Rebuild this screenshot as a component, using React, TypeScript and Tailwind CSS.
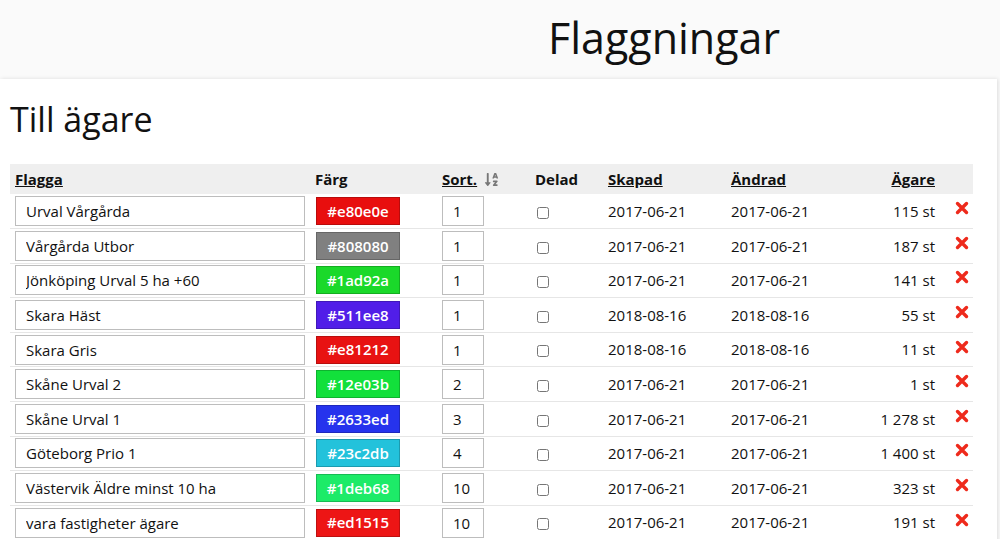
import { FaSortAlphaDown } from "react-icons/fa";

type Flagga = {
  namn: string;
  farg: string;
  sort: number;
  skapad: string;
  andrad: string;
  agare: string;
};

const FLAGGOR: Flagga[] = [
  { namn: "Urval Vårgårda", farg: "#e80e0e", sort: 1, skapad: "2017-06-21", andrad: "2017-06-21", agare: "115 st" },
  { namn: "Vårgårda Utbor", farg: "#808080", sort: 1, skapad: "2017-06-21", andrad: "2017-06-21", agare: "187 st" },
  { namn: "Jönköping Urval 5 ha +60", farg: "#1ad92a", sort: 1, skapad: "2017-06-21", andrad: "2017-06-21", agare: "141 st" },
  { namn: "Skara Häst", farg: "#511ee8", sort: 1, skapad: "2018-08-16", andrad: "2018-08-16", agare: "55 st" },
  { namn: "Skara Gris", farg: "#e81212", sort: 1, skapad: "2018-08-16", andrad: "2018-08-16", agare: "11 st" },
  { namn: "Skåne Urval 2", farg: "#12e03b", sort: 2, skapad: "2017-06-21", andrad: "2017-06-21", agare: "1 st" },
  { namn: "Skåne Urval 1", farg: "#2633ed", sort: 3, skapad: "2017-06-21", andrad: "2017-06-21", agare: "1 278 st" },
  { namn: "Göteborg Prio 1", farg: "#23c2db", sort: 4, skapad: "2017-06-21", andrad: "2017-06-21", agare: "1 400 st" },
  { namn: "Västervik Äldre minst 10 ha", farg: "#1deb68", sort: 10, skapad: "2017-06-21", andrad: "2017-06-21", agare: "323 st" },
  { namn: "vara fastigheter ägare", farg: "#ed1515", sort: 10, skapad: "2017-06-21", andrad: "2017-06-21", agare: "191 st" },
];

function Kryss() {
  return (
    <svg width="14" height="14" viewBox="0 0 14 14" className="block -mt-[6px]">
      <path d="M2.5 2.5 L11.5 11.5 M11.5 2.5 L2.5 11.5" stroke="#ee2a1c" strokeWidth="3.4" strokeLinecap="round" />
    </svg>
  );
}

export default function App() {
  return (
    <div className="min-h-screen bg-[#fafafa] text-[#111] font-['Open_Sans',sans-serif]">
      <header className="h-[79px] flex items-center pl-[548px]">
        <h1 className="text-[43px] leading-none pb-1">Flaggningar</h1>
      </header>

      <main className="bg-white w-[997px] shadow-[1px_0_4px_rgba(0,0,0,0.12)] pl-[10px] pt-[23px] pb-4">
        <h2 className="text-[34px] leading-none mb-[28px]">Till ägare</h2>

        <table className="w-[963px] border-collapse text-[15px]">
          <thead>
            <tr className="bg-[#efefef] h-[30px] text-left font-bold">
              <th className="w-[300px] px-[5px] font-bold"><span className="underline">Flagga</span></th>
              <th className="w-[127px] px-[5px] font-bold">Färg</th>
              <th className="w-[93px] px-[5px] font-bold">
                <span className="inline-flex items-center gap-[7px]">
                  <span className="underline">Sort.</span>
                  <FaSortAlphaDown className="text-[#777] w-[15px] h-[15px]" />
                </span>
              </th>
              <th className="w-[73px] px-[5px] font-bold">Delad</th>
              <th className="w-[123px] px-[5px] font-bold"><span className="underline">Skapad</span></th>
              <th className="w-[124px] px-[5px] font-bold"><span className="underline">Ändrad</span></th>
              <th className="w-[90px] px-[5px] text-right font-bold"><span className="underline">Ägare</span></th>
              <th className="w-[33px]"></th>
            </tr>
          </thead>
          <tbody>
            {FLAGGOR.map((f) => (
              <tr key={f.namn} className="h-[34.6px] border-b border-[#e6e6e6]">
                <td className="px-[5px]">
                  <input
                    defaultValue={f.namn}
                    className="w-[290px] h-[30px] border border-[#bdbdbd] px-[10px] text-[15px] outline-none"
                  />
                </td>
                <td className="px-[6px]">
                  <div
                    className="w-[84px] h-[28px] border border-black/20 text-white font-semibold flex items-center justify-center"
                    style={{ backgroundColor: f.farg }}
                  >
                    {f.farg}
                  </div>
                </td>
                <td className="px-[5px]">
                  <input
                    defaultValue={f.sort}
                    className="w-[42px] h-[30px] border border-[#bdbdbd] px-[10px] text-[15px] outline-none"
                  />
                </td>
                <td className="px-[5px]">
                  <input type="checkbox" className="ml-[2px] w-[12px] h-[12px] align-middle" />
                </td>
                <td className="px-[5px]">{f.skapad}</td>
                <td className="px-[5px]">{f.andrad}</td>
                <td className="px-[5px] text-right">{f.agare}</td>
                <td className="pl-[15px]">
                  <Kryss />
                </td>
              </tr>
            ))}
          </tbody>
        </table>
      </main>
    </div>
  );
}
